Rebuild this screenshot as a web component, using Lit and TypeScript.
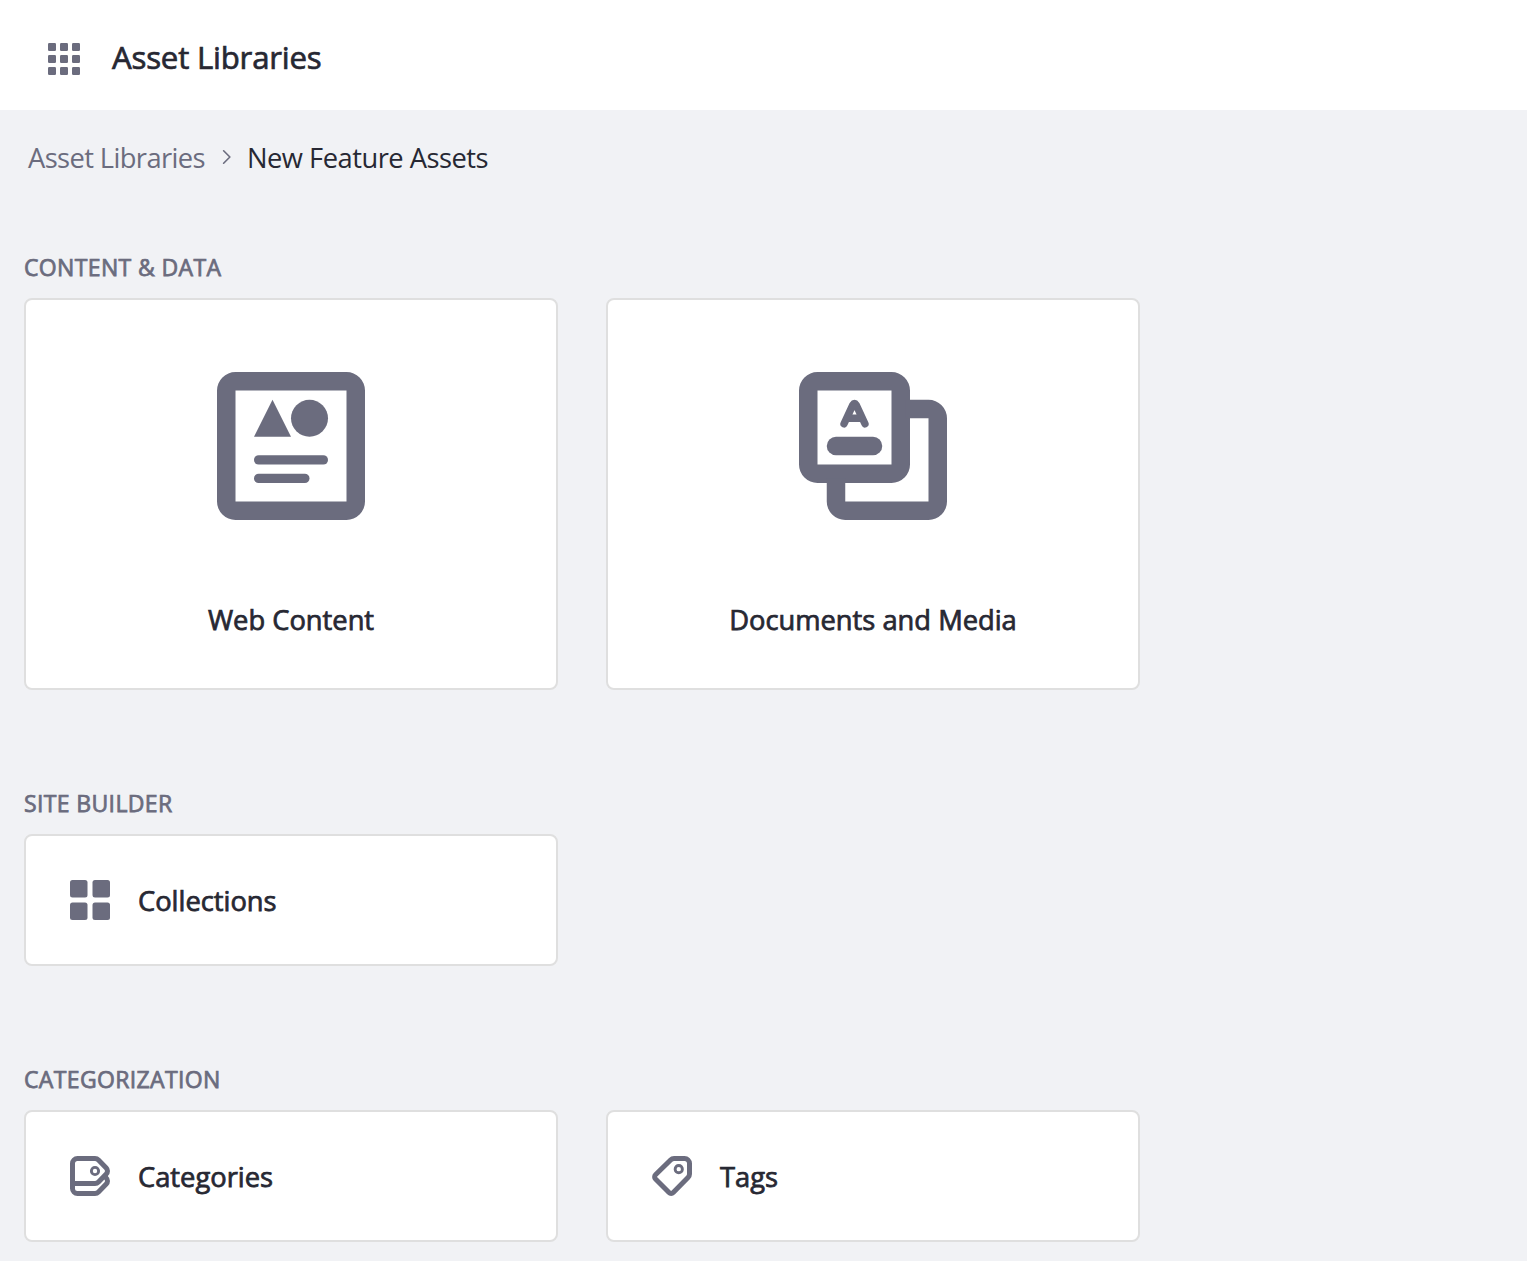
import { LitElement, html, css, svg, TemplateResult } from "lit";
import { customElement, property } from "lit/decorators.js";

const icons: Record<string, TemplateResult> = {
  apps: svg`${[0, 6, 12].map((y) =>
    [0, 6, 12].map((x) => svg`<rect x=${x} y=${y} width="4" height="4" rx=".6" />`)
  )}`,
  "web-content": svg`
    <path fill-rule="evenodd" d="M2 0h12a2 2 0 0 1 2 2v12a2 2 0 0 1-2 2H2a2 2 0 0 1-2-2V2a2 2 0 0 1 2-2zM2 2v12h12V2z" />
    <path d="M4 7l2-4 2 4z" />
    <circle cx="10" cy="5" r="2" />
    <rect x="4" y="9" width="8" height="1" rx=".5" />
    <rect x="4" y="11" width="6" height="1" rx=".5" />`,
  documents: svg`
    <path fill-rule="evenodd" d="M2 0h8a2 2 0 0 1 2 2v8a2 2 0 0 1-2 2H2a2 2 0 0 1-2-2V2a2 2 0 0 1 2-2zM2 2v8h8V2z" />
    <path d="M11.5 3H14a2 2 0 0 1 2 2v9a2 2 0 0 1-2 2H5a2 2 0 0 1-2-2v-2.500h2V14h9V5h-2.500z" />
    <rect x="3" y="7" width="6" height="2" rx="1" />
    <path d="M4.870 5.600L5.820 3.550Q6 3.250 6.180 3.550L7.130 5.600M5.350 5h1.300" fill="none" stroke="currentColor" stroke-width=".8" stroke-linecap="round" stroke-linejoin="round" />
    <path d="M5.600 3.800a.45.45 0 0 1 .8 0z" stroke="currentColor" stroke-width=".3" />`,
  collections: svg`${[0, 9].map((y) =>
    [0, 9].map((x) => svg`<rect x=${x} y=${y} width="7" height="7" rx="1" />`)
  )}`,
  categories: svg`
    <g fill="none" stroke="currentColor" stroke-width="2">
      <path d="M1 10.900V3a2 2 0 0 1 2-2h7a2 2 0 0 1 1.400.6l3.100 3.200a1.700 1.700 0 0 1 0 2.400l-3.100 3.200a2 2 0 0 1-1.400.6H1" />
      <path d="M1 9.500V13a2 2 0 0 0 2 2h7a2 2 0 0 0 1.400-.6l3.100-3.200a1.700 1.700 0 0 0 0-2.400l-.3-.5" />
    </g>
    <circle cx="10" cy="6" r="1.450" fill="none" stroke="currentColor" stroke-width="1.150" />`,
  tags: svg`
    <path d="M13 1H8.830a2 2 0 0 0-1.400.6L1.400 7.500a1.200 1.200 0 0 0 0 1.700l5.400 5.400a1.200 1.200 0 0 0 1.700 0l5.900-6a2 2 0 0 0 .6-1.400V3a2 2 0 0 0-2-2z" fill="none" stroke="currentColor" stroke-width="2" />
    <circle cx="10.700" cy="5.250" r="1.450" fill="none" stroke="currentColor" stroke-width="1.150" />`,
  chevron: svg`<path d="M5.300 3l5 5-5 5" fill="none" stroke="currentColor" stroke-width="1.300" stroke-linecap="round" stroke-linejoin="round" />`,
};

@customElement("ui-icon")
export class UiIcon extends LitElement {
  static styles = css`
    :host { display: block; flex: none; color: #6b6c7e; }
    .glyph { display: block; width: 100%; height: 100%; fill: currentColor; }
  `;
  @property() name = "";
  render() {
    return html`<svg class="glyph" viewBox="0 0 16 16" aria-hidden="true">${icons[this.name]}</svg>`;
  }
}

interface Entry { label: string; icon: string; }
interface Section { title: string; large: boolean; entries: Entry[]; }

const sections: Section[] = [
  {
    title: "CONTENT & DATA", large: true,
    entries: [
      { label: "Web Content", icon: "web-content" },
      { label: "Documents and Media", icon: "documents" },
    ],
  },
  { title: "SITE BUILDER", large: false, entries: [{ label: "Collections", icon: "collections" }] },
  {
    title: "CATEGORIZATION", large: false,
    entries: [
      { label: "Categories", icon: "categories" },
      { label: "Tags", icon: "tags" },
    ],
  },
];

@customElement("app-root")
export class AppRoot extends LitElement {
  static styles = css`
    :host {
      display: block;
      height: 1261px;
      overflow: hidden;
      box-sizing: border-box;
      background: #f1f2f5;
      color: #272833;
      font-family: "Open Sans", "Noto Sans", sans-serif;
      font-size: 27.300px;
      line-height: 36px;
    }
    .header { display: flex; align-items: center; height: 110px; box-sizing: border-box; padding: 8px 48px 0; gap: 32px; background: #fff; }
    .apps { width: 32px; height: 32px; }
    .title { margin: -4px 0 0; font-size: 31.200px; letter-spacing: -.2px; font-weight: 400; line-height: 40px; -webkit-text-stroke: .7px currentColor; }
    .crumbs { display: flex; align-items: center; height: 36px; padding: 30px 28px 0; white-space: nowrap; }
    .parent { color: #6b6c7e; letter-spacing: -.6px; }
    .current { letter-spacing: -.5px; }
    .chevron { width: 20px; height: 20px; margin: -3px 10px 0 12px; }
    .section { padding: 0 24px; margin-top: 75px; }
    .section + .section { margin-top: 97px; }
    .heading { margin: 0; height: 47px; line-height: 32px; font-size: 23px; font-weight: 400; letter-spacing: .36px; color: #6b6c7e; white-space: nowrap; -webkit-text-stroke: .75px currentColor; }
    .cards { display: grid; grid-template-columns: 534px 534px; gap: 48px; }
    .card { box-sizing: border-box; display: flex; align-items: center; background: #fff; border: 2px solid #dfdfdf; border-radius: 8px; white-space: nowrap; }
    .label { -webkit-text-stroke: .75px currentColor; }
    .small { height: 132px; padding: 0 44px; gap: 28px; }
    .small .icon { width: 40px; height: 40px; }
    .small .label { padding-top: 2px; }
    .large { height: 392px; flex-direction: column; padding-top: 72px; gap: 82px; }
    .large .icon { width: 148px; height: 148px; }
  `;
  render() {
    return html`
      <header class="header">
        <ui-icon class="apps" name="apps"></ui-icon>
        <h1 class="title">Asset Libraries</h1>
      </header>
      <nav class="crumbs">
        <span class="parent">Asset Libraries</span>
        <ui-icon class="chevron" name="chevron"></ui-icon>
        <span class="current">New Feature Assets</span>
      </nav>
      ${sections.map(
        (s) => html`<section class="section">
          <h2 class="heading">${s.title}</h2>
          <div class="cards">
            ${s.entries.map(
              (e) => html`<div class="card ${s.large ? "large" : "small"}">
                <ui-icon class="icon" name=${e.icon}></ui-icon>
                <span class="label">${e.label}</span>
              </div>`
            )}
          </div>
        </section>`
      )}
    `;
  }
}
